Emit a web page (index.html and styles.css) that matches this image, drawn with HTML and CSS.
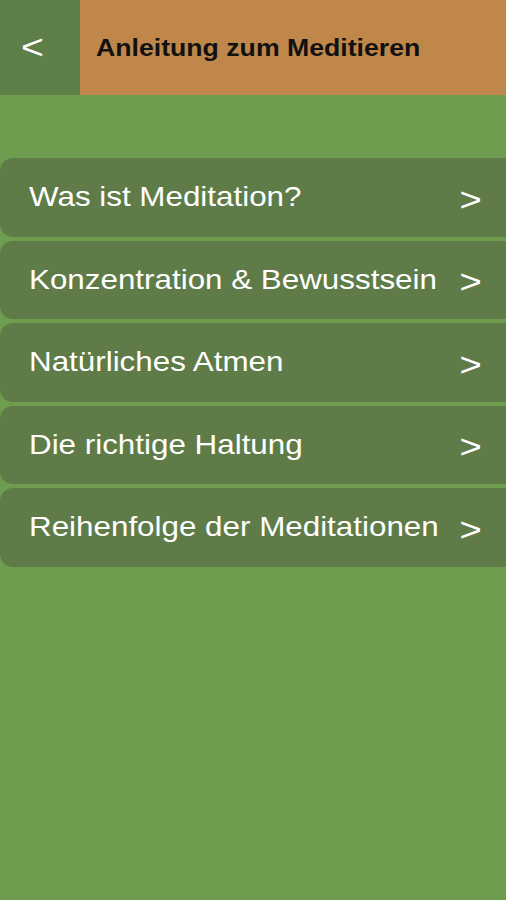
FILE: index.html
```html
<!DOCTYPE html>
<html>
<head>
    <title>Anleitung zum Meditieren</title>
    <link rel="stylesheet" href="styles.css">
</head>
<body>

<div class="header">
    <div class="back"><span class="wide">&lt;</span></div>
    <div class="title"><span class="wide">Anleitung zum Meditieren</span></div>
</div>

<div class="menu">
    <div class="item"><span class="wide">Was ist Meditation?</span><span class="arrow">&gt;</span></div>
    <div class="item"><span class="wide">Konzentration &amp; Bewusstsein</span><span class="arrow">&gt;</span></div>
    <div class="item"><span class="wide">Natürliches Atmen</span><span class="arrow">&gt;</span></div>
    <div class="item"><span class="wide">Die richtige Haltung</span><span class="arrow">&gt;</span></div>
    <div class="item"><span class="wide">Reihenfolge der Meditationen</span><span class="arrow">&gt;</span></div>
</div>

</body>
</html>
```
FILE: styles.css
```css
body {
    margin: 0;
    height: 900px;
    background: #6e9d4f;
    font-family: 'Liberation Sans', Arial, sans-serif;
    color: #fff;
}

/* the app text is drawn a little stretched sideways */
.wide {
    display: inline-block;
    transform: scaleX(1.12);
    transform-origin: left center;
    white-space: nowrap;
}

.header {
    display: flex;
    height: 95px;
    background: #c0874a;
}

.back {
    width: 80px;
    background: #5f7f49;
    display: flex;
    align-items: center;
    padding-left: 21px;
    padding-bottom: 2px;
    box-sizing: border-box;
    font-size: 35px;
}

.title {
    display: flex;
    align-items: center;
    padding-left: 16px;
    font-size: 23.8px;
    font-weight: bold;
    color: #111;
}

.menu {
    display: flex;
    flex-direction: column;
    gap: 4px;
    padding-top: 63px;
}

.item {
    height: 78.5px;
    display: flex;
    align-items: center;
    justify-content: space-between;
    padding: 0 24px 0 29px;
    background: #5f7c48;
    border-radius: 13px 0 0 13px;
    font-size: 28px;
}

.arrow {
    display: inline-block;
    font-size: 34px;
    line-height: 1;
    padding-top: 3px;
    transform: scaleX(1.12);
    transform-origin: right center;
}
```
